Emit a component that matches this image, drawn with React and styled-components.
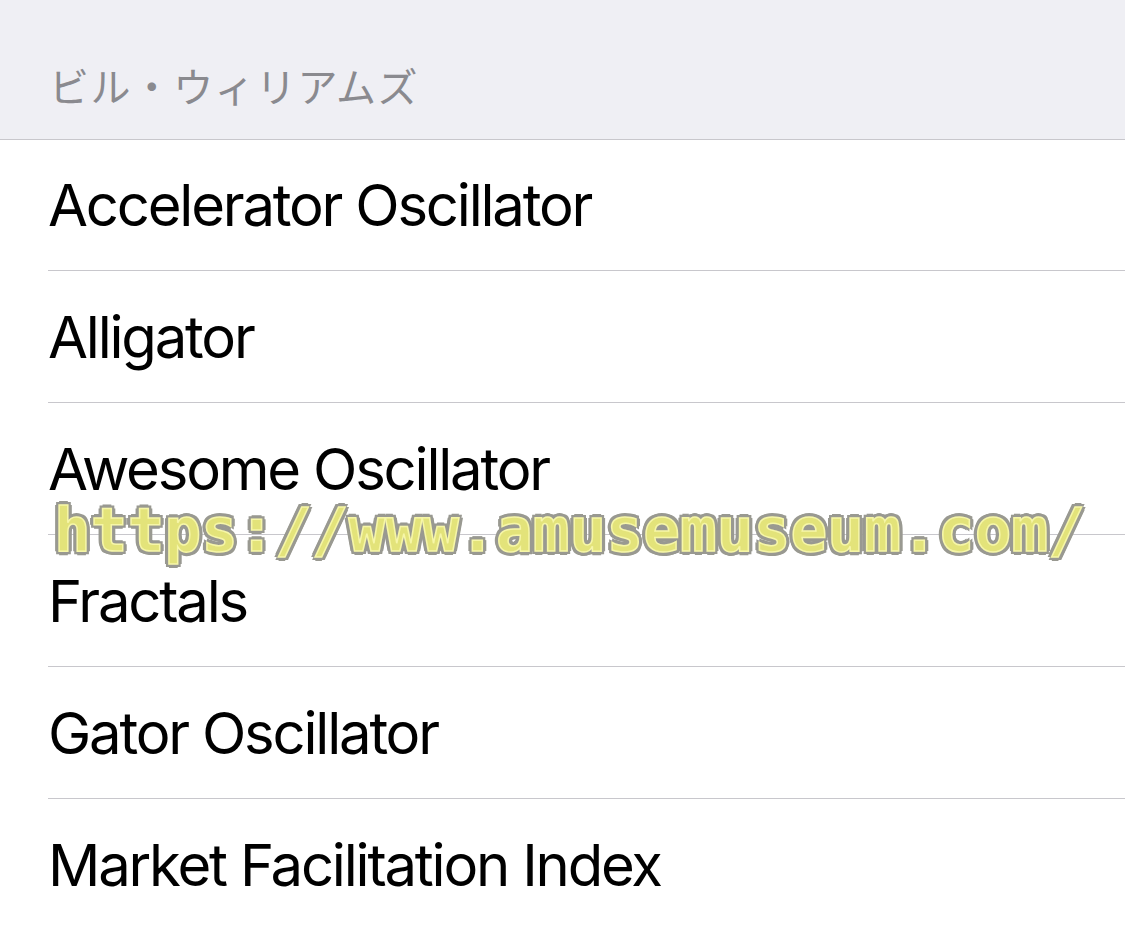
import React from 'react';
import styled, { createGlobalStyle } from 'styled-components';

const GlobalStyle = createGlobalStyle`
  html, body {
    margin: 0;
    padding: 0;
    background: #fff;
  }
  body {
    font-family: Inter, "Noto Sans", "Noto Sans CJK JP", sans-serif;
    -webkit-font-smoothing: antialiased;
  }
`;

const Screen = styled.div`
  position: relative;
  width: 1125px;
  height: 929px;
  overflow: hidden;
  background: #fff;
`;

const SectionHeader = styled.div`
  box-sizing: border-box;
  height: 140px;
  display: flex;
  align-items: center;
  padding: 30px 0 0 49px;
  background: #efeff4;
  border-bottom: 1px solid #c8c7cc;
  color: #8a8a8f;
  font-family: "Noto Sans CJK JP", sans-serif;
  font-size: 40px;
  font-weight: 400;
  letter-spacing: 1.4px;
`;

const List = styled.ul`
  margin: 0;
  padding: 0 0 0 48px;
  list-style: none;
`;

const Row = styled.li`
  height: 131px;
  display: flex;
  align-items: center;
  border-bottom: 1px solid #c8c7cc;
  color: #000;
  font-size: 58px;
  font-weight: 400;
  letter-spacing: -2.2px;

  &:first-child {
    height: 130px;
  }
`;

// watermark stamped over the screenshot
const Watermark = styled.div`
  position: absolute;
  left: 54px;
  top: 494px;
  font-family: "DejaVu Sans Mono", monospace;
  font-weight: bold;
  font-size: 61px;
  letter-spacing: 0.1px;
  color: #e3e37a;
  -webkit-text-stroke: 1.5px #f6f6a8;
  text-shadow:
    4px 0 0 #999991, -4px 0 0 #999991, 0 4px 0 #999991, 0 -4px 0 #999991,
    3px 3px 0 #999991, -3px -3px 0 #999991, 3px -3px 0 #999991, -3px 3px 0 #999991,
    2px 0 0 #999991, -2px 0 0 #999991, 0 2px 0 #999991, 0 -2px 0 #999991;
  pointer-events: none;
  white-space: nowrap;
`;

const items = [
  'Accelerator Oscillator',
  'Alligator',
  'Awesome Oscillator',
  'Fractals',
  'Gator Oscillator',
  'Market Facilitation Index',
];

export default function App() {
  return (
    <Screen>
      <GlobalStyle />
      <SectionHeader>ビル・ウィリアムズ</SectionHeader>
      <List>
        {items.map((name) => (
          <Row key={name}>{name}</Row>
        ))}
      </List>
      <Watermark>https://www.amusemuseum.com/</Watermark>
    </Screen>
  );
}
